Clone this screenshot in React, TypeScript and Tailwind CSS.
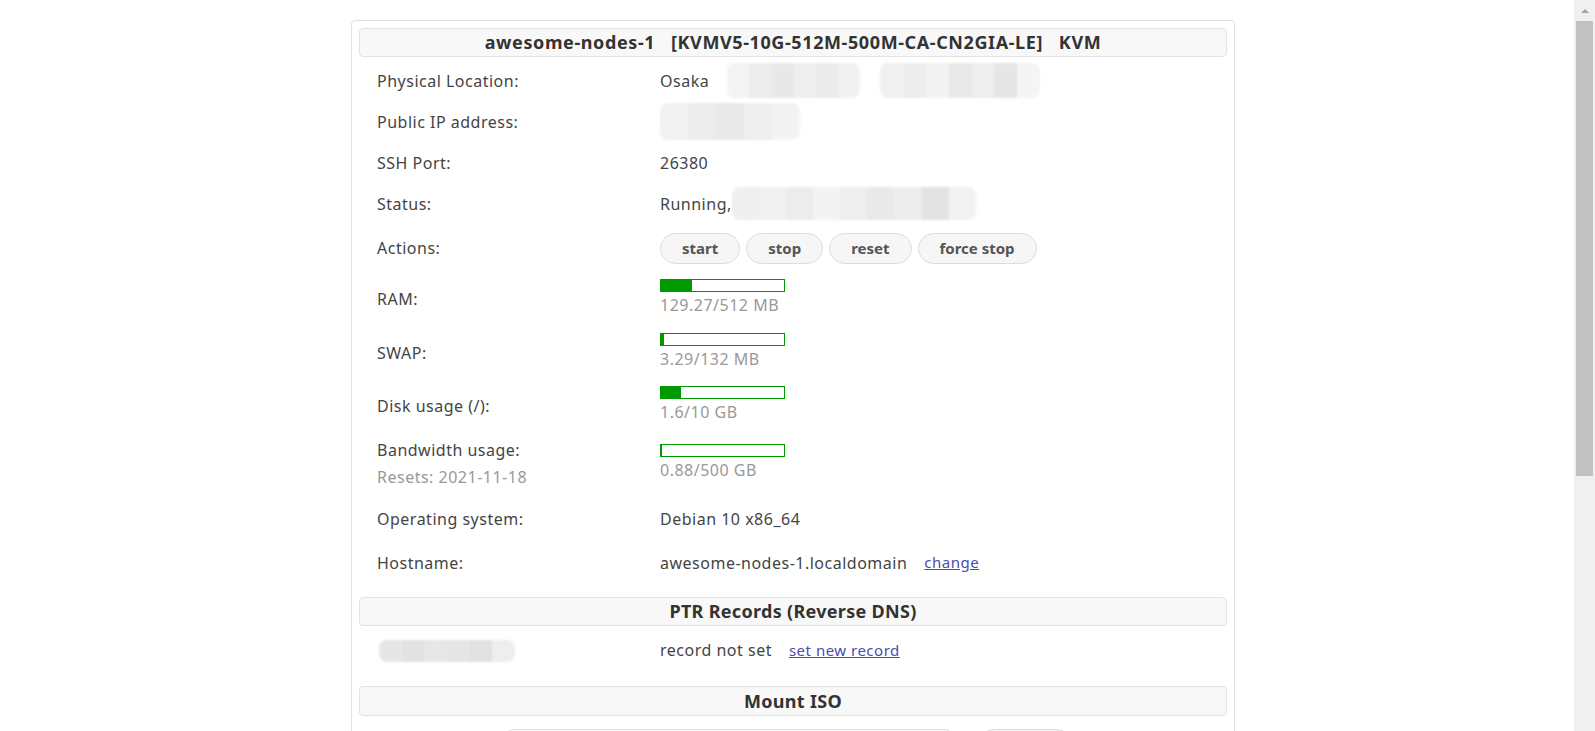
import { useState } from "react";

type Usage = { used: number; total: number; unit: string };

// pixelated blur used to hide private values
function Mosaic({ tiles, className = "" }: { tiles: string[]; className?: string }) {
  return (
    <span className={`inline-flex overflow-hidden rounded-[8px] blur-[1px] align-middle ${className}`}>
      {tiles.map((c, i) => (
        <span key={i} className="h-full flex-1" style={{ backgroundColor: c }}></span>
      ))}
    </span>
  );
}

function Bar({ usage }: { usage: Usage }) {
  const pct = Math.min(100, (usage.used / usage.total) * 100);
  return (
    <div className="flex flex-col pb-[2px]">
      <div className="w-[125px] h-[13px] border border-[#009900] bg-white">
        <div className="h-full bg-[#009900]" style={{ width: `${pct}%` }}></div>
      </div>
      <div className="mt-[1px] text-[#999] leading-[24px]">
        {usage.used}/{usage.total} {usage.unit}
      </div>
    </div>
  );
}

function Row({ label, h, children }: { label: React.ReactNode; h: string; children?: React.ReactNode }) {
  return (
    <div className={`flex items-center px-[18px] ${h}`}>
      <div className="w-[283px] shrink-0">{label}</div>
      <div className="flex items-center">{children}</div>
    </div>
  );
}

function SectionTitle({ title, className = "" }: { title: string; className?: string }) {
  return (
    <div className={`h-[29px] flex items-center justify-center rounded-[4px] border border-[#e3e3e3] bg-[#f8f8f8] font-bold text-[18px] text-[#333] ${className}`}>
      {title}
    </div>
  );
}

const actions = ["start", "stop", "reset", "force stop"];

export default function App() {
  const [iso, setIso] = useState("");

  return (
    <div className="min-h-[1575px] bg-white pt-[20px] pl-[12px] pr-[21px]" style={{ fontFamily: '"Noto Sans", "Open Sans", sans-serif' }}>
      <div className="mx-auto w-[884px] rounded-[4px] border border-[#e0e0e0] p-[7px] text-[16px] tracking-[0.5px] text-[#444]">
        <SectionTitle title="awesome-nodes-1   [KVMV5-10G-512M-500M-CA-CN2GIA-LE]   KVM" className="whitespace-pre tracking-[0.6px]" />

        <div className="mt-[3px]">
          <Row label="Physical Location:" h="h-[41px]">
            Osaka
            <Mosaic className="ml-[18px] w-[133px] h-[35px]" tiles={["#f4f4f4", "#ececec", "#e8e8e8", "#eeeeee", "#ebebeb", "#f1f1f1"]} />
            <Mosaic className="ml-[20px] w-[160px] h-[35px]" tiles={["#f0f0f0", "#ededed", "#f3f3f3", "#e9e9e9", "#eeeeee", "#e6e6e6", "#f5f5f5"]} />
          </Row>
          <Row label="Public IP address:" h="h-[41px]">
            <Mosaic className="w-[140px] h-[37px]" tiles={["#f2f2f2", "#ececec", "#e9e9e9", "#efefef", "#f3f3f3"]} />
          </Row>
          <Row label="SSH Port:" h="h-[41px]">26380</Row>
          <Row label="Status:" h="h-[41px]">
            Running,
            <Mosaic className="w-[244px] h-[33px]" tiles={["#efefef", "#f1f1f1", "#ececec", "#f3f3f3", "#eeeeee", "#e9e9e9", "#ededed", "#e3e3e3", "#f2f2f2"]} />
          </Row>
          <Row label="Actions:" h="h-[48px]">
            <div className="flex gap-[6px] pt-[1px] tracking-normal">
              {actions.map((a) => (
                <button
                  key={a}
                  className="h-[31px] rounded-full border border-[#dcdcdc] bg-[#f6f6f6] px-[21px] text-[15px] font-bold text-[#555]"
                >
                  {a}
                </button>
              ))}
            </div>
          </Row>
          <Row label="RAM:" h="h-[54px]">
            <Bar usage={{ used: 129.27, total: 512, unit: "MB" }} />
          </Row>
          <Row label="SWAP:" h="h-[54px]">
            <Bar usage={{ used: 3.29, total: 132, unit: "MB" }} />
          </Row>
          <Row label="Disk usage (/):" h="h-[52px]">
            <Bar usage={{ used: 1.6, total: 10, unit: "GB" }} />
          </Row>
          <Row
            label={
              <div className="leading-[27px]">
                <div>Bandwidth usage:</div>
                <div className="text-[#999]">Resets: 2021-11-18</div>
              </div>
            }
            h="h-[64px]"
          >
            <Bar usage={{ used: 0.88, total: 500, unit: "GB" }} />
          </Row>
          <Row label="Operating system:" h="h-[45px]">Debian 10 x86_64</Row>
          <Row label="Hostname:" h="h-[43px]">
            awesome-nodes-1.localdomain
            <a href="#" className="ml-[17px] text-[15px] text-[#4b4bb0] underline">change</a>
          </Row>
        </div>

        <SectionTitle title="PTR Records (Reverse DNS)" className="mt-[13px] tracking-[0.3px]" />
        <div className="flex items-center h-[48px] px-[14px]">
          <div className="w-[287px] shrink-0">
            <Mosaic className="ml-[6px] w-[136px] h-[22px]" tiles={["#e6e6e6", "#e2e2e2", "#e7e7e7", "#e5e5e5", "#e1e1e1", "#eeeeee"]} />
          </div>
          record not set
          <a href="#" className="ml-[17px] text-[15px] text-[#4b4bb0] underline">set new record</a>
        </div>

        <SectionTitle title="Mount ISO" className="mt-[12px] h-[30px] tracking-[0.3px]" />
        <div className="flex items-center justify-center gap-[29px] py-[13px] pr-[6px]">
          <select
            value={iso}
            onChange={(e) => setIso(e.target.value)}
            className="h-[30px] w-[442px] rounded-[4px] border border-[#ddd] bg-white px-2 text-[14px]"
          >
            <option value="">-- select ISO --</option>
            <option value="debian">debian-10.10.0-amd64-netinst.iso</option>
          </select>
          <button className="h-[30px] w-[93px] rounded-full border border-[#dcdcdc] bg-[#f6f6f6] text-[15px] font-bold text-[#555]">
            Mount
          </button>
        </div>

        <SectionTitle title="Main controls" className="mt-[12px] tracking-[0.3px]" />
        <div className="h-[400px]"></div>
      </div>

      {/* window scrollbar as seen in the screenshot */}
      <div className="fixed right-0 top-0 h-[731px] w-[21px] bg-[#f0f0f0]">
        <div className="flex h-[21px] items-center justify-center">
          <span className="block h-0 w-0 border-x-[4px] border-b-[4px] border-x-transparent border-b-[#a3a3a3]"></span>
        </div>
        <div className="mx-[2px] h-[455px] bg-[#c1c1c1]"></div>
      </div>
    </div>
  );
}
